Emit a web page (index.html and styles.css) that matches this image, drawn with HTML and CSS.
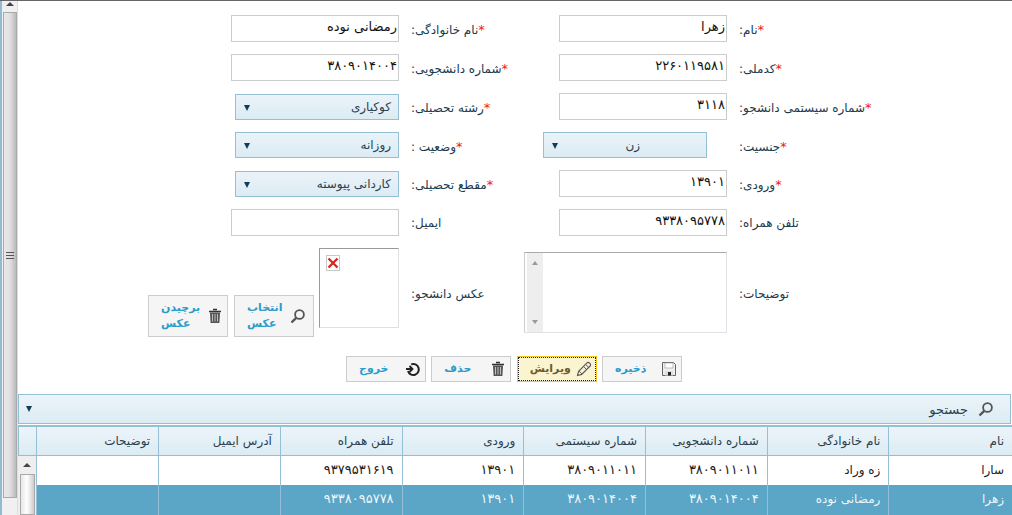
FILE: index.html
```html
<!DOCTYPE html>
<html lang="fa" dir="rtl">
<head>
    <meta charset="UTF-8">
    <title>فرم دانشجو</title>
    <link rel="stylesheet" href="styles.css">
</head>
<body>
    <div class="page">
        <div class="content">
            <form class="student-form">
                <label class="field-label"><span class="star">*</span>نام:</label>
                <input class="text-input" type="text" value="زهرا">
                <label class="field-label"><span class="star">*</span>نام خانوادگی:</label>
                <input class="text-input" type="text" value="رمضانی نوده">

                <label class="field-label"><span class="star">*</span>کدملی:</label>
                <input class="text-input" type="text" value="۲۲۶۰۱۱۹۵۸۱">
                <label class="field-label"><span class="star">*</span>شماره دانشجویی:</label>
                <input class="text-input" type="text" value="۳۸۰۹۰۱۴۰۰۴">

                <label class="field-label"><span class="star">*</span>شماره سیستمی دانشجو:</label>
                <input class="text-input" type="text" value="۳۱۱۸">
                <label class="field-label"><span class="star">*</span>رشته تحصیلی:</label>
                <div class="select-box"><span class="select-text">کوکیاری</span><span class="arrow"></span></div>

                <label class="field-label"><span class="star">*</span>جنسیت:</label>
                <div class="select-box select-box-wide"><span class="select-text">زن</span><span class="arrow"></span></div>
                <label class="field-label"><span class="star">*</span>وضعیت :</label>
                <div class="select-box"><span class="select-text">روزانه</span><span class="arrow"></span></div>

                <label class="field-label"><span class="star">*</span>ورودی:</label>
                <input class="text-input" type="text" value="۱۳۹۰۱">
                <label class="field-label"><span class="star">*</span>مقطع تحصیلی:</label>
                <div class="select-box"><span class="select-text">کاردانی پیوسته</span><span class="arrow"></span></div>

                <label class="field-label">تلفن همراه:</label>
                <input class="text-input" type="text" value="۹۳۳۸۰۹۵۷۷۸">
                <label class="field-label">ایمیل:</label>
                <input class="text-input" type="text">

                <label class="field-label field-label-tall">توضیحات:</label>
                <div class="notes">
                    <div class="notes-scroll">
                        <span class="tiny-up"></span>
                        <span class="tiny-down"></span>
                    </div>
                </div>
                <label class="field-label field-label-tall">عکس دانشجو:</label>
                <div class="photo-cell">
                    <div class="photo">
                        <div class="broken-image">
                            <svg width="12" height="12" viewBox="0 0 12 12"><path d="M1.5 1.5 10.5 10.5M10.5 1.5 1.5 10.5" stroke="#d9281e" stroke-width="2.4"/></svg>
                        </div>
                    </div>
                    <button class="btn btn-tall" type="button">
                        <svg class="icon icon-search" width="16" height="16" viewBox="0 0 16 16"><circle cx="9.5" cy="6.5" r="4.4" fill="none" stroke="#555" stroke-width="1.8"/><path d="M6.2 9.8 1.5 14.5" stroke="#555" stroke-width="2.4"/></svg>
                        <span class="btn-text">انتخاب عکس</span>
                    </button>
                    <button class="btn btn-tall" type="button">
                        <svg class="icon" width="16" height="16" viewBox="0 0 16 16"><use href="#trash"/></svg>
                        <span class="btn-text">برچیدن عکس</span>
                    </button>
                </div>
            </form>

            <div class="actions">
                <button class="btn" type="button">
                    <svg class="icon" width="16" height="16" viewBox="0 0 16 16"><path d="M1.5 1.5h11l2 2v11h-13z" fill="#eee" stroke="#666"/><rect x="4" y="2" width="8" height="5" fill="#fff" stroke="#999" stroke-width=".6"/><rect x="4" y="10" width="8" height="4.5" fill="#ddd"/><rect x="7" y="11" width="3" height="3.5" fill="#222"/></svg>
                    <span class="btn-text">ذخیره</span>
                </button>
                <button class="btn btn-active" type="button">
                    <svg class="icon" width="16" height="16" viewBox="0 0 16 16"><path d="M1.5 14.5 2.6 10.3 11 1.9a1.6 1.6 0 0 1 2.3 0l.8.8a1.6 1.6 0 0 1 0 2.3L5.7 13.4z" fill="#f6f0d8" stroke="#555" stroke-width="1.1"/><path d="M3 10 6 13M9.6 3.4 12.6 6.4M7.5 5.5 10.5 8.5" stroke="#555" stroke-width=".9" fill="none"/></svg>
                    <span class="btn-text">ویرایش</span>
                </button>
                <button class="btn" type="button">
                    <svg class="icon" width="16" height="16" viewBox="0 0 16 16"><use href="#trash"/></svg>
                    <span class="btn-text">حذف</span>
                </button>
                <button class="btn" type="button">
                    <svg class="icon" width="16" height="16" viewBox="0 0 16 16"><path d="M6.2 3.4A5.5 5.5 0 1 1 3 10" fill="none" stroke="#222" stroke-width="2"/><path d="M1 8h6.5M4.5 5 7.5 8 4.5 11" fill="none" stroke="#222" stroke-width="1.8"/></svg>
                    <span class="btn-text">خروج</span>
                </button>
            </div>

            <div class="search-panel">
                <svg class="icon" width="16" height="16" viewBox="0 0 16 16"><circle cx="9.5" cy="6.5" r="4.4" fill="none" stroke="#555" stroke-width="1.8"/><path d="M6.2 9.8 1.5 14.5" stroke="#555" stroke-width="2.4"/></svg>
                <span class="search-title">جستجو</span>
                <span class="arrow"></span>
            </div>

            <div class="grid">
                <div class="grid-row grid-head">
                    <div class="cell">نام</div>
                    <div class="cell">نام خانوادگی</div>
                    <div class="cell">شماره دانشجویی</div>
                    <div class="cell">شماره سیستمی</div>
                    <div class="cell">ورودی</div>
                    <div class="cell">تلفن همراه</div>
                    <div class="cell">آدرس ایمیل</div>
                    <div class="cell">توضیحات</div>
                    <div class="cell"></div>
                </div>
                <div class="grid-row">
                    <div class="cell">سارا</div>
                    <div class="cell">زه وراد</div>
                    <div class="cell cell-num">۳۸۰۹۰۱۱۰۱۱</div>
                    <div class="cell cell-num">۳۸۰۹۰۱۱۰۱۱</div>
                    <div class="cell cell-num">۱۳۹۰۱</div>
                    <div class="cell cell-num">۹۳۷۹۵۳۱۶۱۹</div>
                    <div class="cell"></div>
                    <div class="cell"></div>
                </div>
                <div class="grid-row grid-row-selected">
                    <div class="cell">زهرا</div>
                    <div class="cell">رمضانی نوده</div>
                    <div class="cell cell-num">۳۸۰۹۰۱۴۰۰۴</div>
                    <div class="cell cell-num">۳۸۰۹۰۱۴۰۰۴</div>
                    <div class="cell cell-num">۱۳۹۰۱</div>
                    <div class="cell cell-num">۹۳۳۸۰۹۵۷۷۸</div>
                    <div class="cell"></div>
                    <div class="cell"></div>
                </div>
                <div class="grid-scroll">
                    <span class="scroll-up"></span>
                    <span class="grid-thumb"></span>
                </div>
            </div>
        </div>

        <div class="page-scroll">
            <span class="scroll-up"></span>
            <div class="page-thumb"><span class="grip"></span></div>
        </div>
    </div>

    <svg class="defs" width="0" height="0">
        <symbol id="trash" viewBox="0 0 16 16">
            <path d="M6 1.5h4M2 3.5h12" stroke="#333" stroke-width="1.6" fill="none"/>
            <path d="M3 4.5h10l-.6 10.5H3.600z" fill="#555"/>
            <path d="M5.500 6v7.500M8 6v7.500M10.500 6v7.500" stroke="#ccc" stroke-width=".9"/>
        </symbol>
    </svg>
</body>
</html>
```

FILE: styles.css
```css
* {
    margin: 0;
    padding: 0;
    box-sizing: border-box;
}

html, body {
    height: 100%;
    overflow: hidden;
}

body {
    background-color: white;
    font-family: "DejaVu Sans", sans-serif;
    font-size: 12px;
    color: #1c3a4e;
}

.page {
    display: flex;
    height: 515px;
    border-top: 1px solid #666;
}

.defs {
    position: absolute;
}

/* form */
.content {
    flex: 1;
    min-width: 0;
    overflow: hidden;
}

.student-form {
    display: grid;
    grid-template-columns: 161px 168px 136px 168px;
    grid-template-rows: 27px 27px 27px 26px 27px 27px 89px;
    gap: 12px;
    padding: 14px 112px 0 0;
}

.field-label {
    padding-top: 7px;
    white-space: nowrap;
    text-align: left;
}

.field-label-tall {
    padding-top: 39px;
}

.star {
    color: #f01818;
    font-size: 13px;
}

.text-input {
    width: 168px;
    height: 27px;
    border: 1px solid #ccc;
    padding: 0 1px 4px 6px;
    font: inherit;
    font-size: 13px;
    color: #111;
    text-align: right;
}

.select-box {
    position: relative;
    width: 164px;
    height: 26px;
    border: 1px solid #95bfd4;
    background: linear-gradient(#eaf3f9, #dcebf3);
    display: flex;
    align-items: center;
    padding-right: 7px;
    align-self: end;
}

.select-box-wide {
    margin-right: 20px;
    padding-right: 66px;
}

.select-box .arrow {
    position: absolute;
    left: 8px;
    top: 10px;
}

.select-text {
    color: #2b3f4e;
}

.arrow {
    display: block;
    width: 0;
    height: 0;
    border-left: 3.5px solid transparent;
    border-right: 3.5px solid transparent;
    border-top: 6px solid #123e55;
}

.notes {
    width: 203px;
    height: 81px;
    margin-top: 4px;
    border: 1px solid #dfe2e6;
    border-top-color: #aaa;
    border-left-color: #ccc;
    display: flex;
    justify-content: flex-end;
}

.notes-scroll {
    width: 16px;
    margin-left: 2px;
    background: #eee;
    display: flex;
    flex-direction: column;
    justify-content: space-between;
    align-items: center;
    padding: 8px 0;
}

.tiny-up, .tiny-down {
    width: 0;
    height: 0;
    border-left: 3.5px solid transparent;
    border-right: 3.5px solid transparent;
}

.tiny-up {
    border-bottom: 4px solid #999;
}

.tiny-down {
    border-top: 4px solid #999;
}

.photo-cell {
    display: flex;
    gap: 5px;
    width: 168px;
    height: 89px;
}

.photo {
    width: 80px;
    height: 80px;
    flex-shrink: 0;
    border: 1px solid #e0e0e0;
    border-top-color: #999;
    border-left-color: #999;
    padding: 6px 0 0 6px;
    direction: ltr;
}

.broken-image {
    width: 14px;
    height: 16px;
    border: 1px solid #c8c8c8;
    display: flex;
    align-items: center;
    justify-content: center;
}

/* buttons */
.btn {
    width: 80px;
    height: 26px;
    flex-shrink: 0;
    display: flex;
    align-items: center;
    justify-content: space-between;
    padding: 0 4px 0 12px;
    border: 1px solid #ccc;
    background-color: #f5f5f5;
    font: inherit;
    font-size: 11px;
    font-weight: bold;
    color: #2b9ccb;
}

.btn-tall {
    height: 42px;
    align-self: flex-end;
}

.btn-tall + .btn-tall {
    margin-right: 1px;
}

.btn-text {
    width: 42px;
    line-height: 16px;
    text-align: left;
}

.btn-active {
    border: 1px solid #f2c81c;
    outline: 1px dotted #222;
    outline-offset: -2px;
    background-color: #fbf4d0;
    color: #6b5c2e;
}

.icon {
    flex-shrink: 0;
}

.icon-search {
    margin-right: 3px;
}

.actions {
    display: flex;
    justify-content: center;
    gap: 5.33px;
    margin-top: 19px;
    padding-right: 2px;
}

/* search panel */
.search-panel {
    display: flex;
    align-items: center;
    gap: 10px;
    height: 30px;
    margin-top: 12px;
    margin-right: 1px;
    padding: 0 16px 0 7px;
    border: 1px solid #95bfd4;
    background: linear-gradient(#ecf4fa, #dcebf3);
}

.search-title {
    flex: 1;
    color: #2b3f4e;
    font-size: 13px;
}

/* results grid */
.grid {
    position: relative;
    margin-top: 1px;
    border-top: 2px solid #95bfd4;
}

.grid-row {
    display: grid;
    grid-template-columns: 123.6px repeat(7, 121.71px) 1fr;
    height: 29px;
    background-color: white;
    color: #222;
}

.grid-head {
    background: linear-gradient(#ecf4fa, #dcebf3);
    border-bottom: 1px solid #95bfd4;
    color: #2b3f4e;
}

.grid-row-selected {
    height: 30px;
    background-color: #5ba5c7;
    color: #eef6fa;
}

.cell {
    padding: 7px 8px 0 0;
    border-left: 1px solid #95bfd4;
    white-space: nowrap;
    overflow: hidden;
}

.cell-num {
    padding-top: 6px;
    font-size: 13px;
}

.grid-scroll {
    position: absolute;
    left: 0;
    top: 29px;
    bottom: 0;
    width: 18px;
    background-color: #eee;
    display: flex;
    flex-direction: column;
    align-items: center;
    padding-top: 7px;
}

.grid-thumb {
    width: 15px;
    flex: 1;
    margin-top: 7px;
    border: 1px solid #aaa;
    background: linear-gradient(90deg, #e6e6e6, #fff 45%, #ccc);
}

/* page scrollbar */
.page-scroll {
    order: 1;
    width: 18px;
    flex-shrink: 0;
    background-color: #f0f0f0;
    border-left: 2px solid #8fbcd4;
    border-right: 1px solid #ddd;
    display: flex;
    flex-direction: column;
    align-items: center;
    padding-top: 1px;
}

.scroll-up {
    display: block;
    width: 0;
    height: 0;
    border-left: 4px solid transparent;
    border-right: 4px solid transparent;
    border-bottom: 4px solid #444;
}

.page-thumb {
    width: 14px;
    height: 486px;
    margin-top: 6px;
    border: 1px solid #aaa;
    background: linear-gradient(90deg, #e8e8e8, #e0e0e0 50%, #bbb);
    display: flex;
    align-items: center;
    justify-content: center;
}

.grip {
    display: block;
    width: 8px;
    height: 7px;
    border-top: 1px solid #555;
    border-bottom: 1px solid #555;
    background: linear-gradient(#555, #555) center / 100% 1px no-repeat;
}
```
